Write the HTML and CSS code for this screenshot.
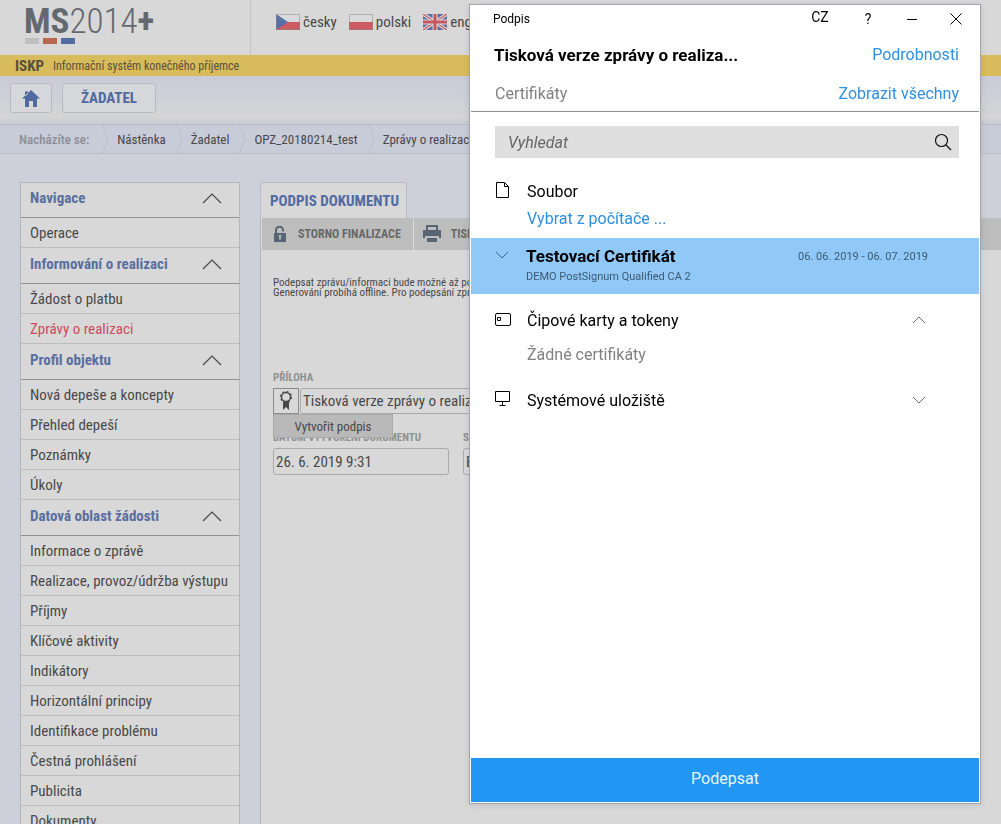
FILE: index.html
```html
<!DOCTYPE html>
<html lang="cs">
<head>
<meta charset="utf-8">
<meta name="viewport" content="width=device-width, initial-scale=1">
<title>MS2014+ – Podpis dokumentu</title>
<link rel="stylesheet" href="styles.css">
</head>
<body>
<svg class="symbols" width="0" height="0" aria-hidden="true">
  <symbol id="fold" viewBox="0 0 20 12"><path d="M1 11 10 2l9 9" fill="none" stroke="currentColor" stroke-width="1.2"/></symbol>
  <symbol id="chevron" viewBox="0 0 14 8"><path d="M1 1l6 6 6-6" fill="none" stroke="currentColor"/></symbol>
</svg>
<div class="page">
  <header class="top">
    <div class="logo-area">
      <div class="logo"><b>MS</b><span class="logo-year">2014</span><b>+</b></div>
      <div class="logo-bars"><i class="bar-grey"></i><i class="bar-red"></i><i class="bar-blue"></i></div>
    </div>
    <nav class="languages" aria-label="Jazyk">
      <a href="#"><svg class="flag" viewBox="0 0 24 16"><path fill="#d9dadb" d="M0 0h24v8H0z"/><path fill="#cc5b62" d="M0 8h24v8H0z"/><path fill="#5870a4" d="M0 0l12 8-12 8z"/><path d="M.5.5h23v15H.5z" fill="none" stroke="#888" stroke-opacity=".5"/></svg>česky</a>
      <a href="#"><svg class="flag" viewBox="0 0 24 16"><path fill="#dadada" d="M0 0h24v8H0z"/><path fill="#cc5b62" d="M0 8h24v8H0z"/><path d="M.5.5h23v15H.5z" fill="none" stroke="#888" stroke-opacity=".5"/></svg>polski</a>
      <a href="#"><svg class="flag" viewBox="0 0 24 16"><path fill="#5e6b9d" d="M0 0h24v16H0z"/><path d="M0 0l24 16M24 0L0 16" stroke="#ddd" stroke-width="3.5"/><path d="M0 0l24 16M24 0L0 16" stroke="#c65761" stroke-width="1.2"/><path d="M12 0v16M0 8h24" stroke="#ddd" stroke-width="5"/><path d="M12 0v16M0 8h24" stroke="#c65761" stroke-width="3"/></svg>english</a>
    </nav>
  </header>
  <div class="system"><b>ISKP</b><span>Informační systém konečného příjemce</span></div>
  <div class="mainmenu">
    <button class="menu-btn home" aria-label="Domů"><svg viewBox="0 0 18 17" width="18" height="17"><path fill="#50699f" d="M9 0L0 8.500h3V17h4v-6h4v6h4V8.500h3L9 0zM3 1.500h3V4L3 6.500z"/></svg></button>
    <button class="menu-btn">ŽADATEL</button>
  </div>
  <nav class="crumbs" aria-label="Drobečková navigace">
    <span class="crumb-label">Nacházíte se:</span>
    <svg class="sep" viewBox="0 0 8 30"><path d="M1 0l6 15-6 15"/></svg><a href="#">Nástěnka</a>
    <svg class="sep" viewBox="0 0 8 30"><path d="M1 0l6 15-6 15"/></svg><a href="#">Žadatel</a>
    <svg class="sep" viewBox="0 0 8 30"><path d="M1 0l6 15-6 15"/></svg><a href="#">OPZ_20180214_test</a>
    <svg class="sep" viewBox="0 0 8 30"><path d="M1 0l6 15-6 15"/></svg><a href="#">Zprávy o realizaci</a>
  </nav>
  <div class="content">
    <nav class="sidebar" aria-label="Navigace">
      <button class="group">Navigace<svg><use href="#fold"/></svg></button>
      <a href="#">Operace</a>
      <button class="group">Informování o realizaci<svg><use href="#fold"/></svg></button>
      <a href="#">Žádost o platbu</a>
      <a href="#" class="active">Zprávy o realizaci</a>
      <button class="group">Profil objektu<svg><use href="#fold"/></svg></button>
      <a href="#">Nová depeše a koncepty</a>
      <a href="#">Přehled depeší</a>
      <a href="#">Poznámky</a>
      <a href="#">Úkoly</a>
      <button class="group">Datová oblast žádosti<svg><use href="#fold"/></svg></button>
      <a href="#">Informace o zprávě</a>
      <a href="#">Realizace, provoz/údržba výstupu</a>
      <a href="#">Příjmy</a>
      <a href="#">Klíčové aktivity</a>
      <a href="#">Indikátory</a>
      <a href="#">Horizontální principy</a>
      <a href="#">Identifikace problému</a>
      <a href="#">Čestná prohlášení</a>
      <a href="#">Publicita</a>
      <a href="#">Dokumenty</a>
    </nav>
    <main class="document">
      <h1 class="tab">PODPIS DOKUMENTU</h1>
      <div class="panel">
        <div class="actions">
          <button><svg width="14" height="17" viewBox="0 0 14 17"><path d="M3 8V4.500a3.500 3.500 0 0 1 7-.5v1.500" fill="none" stroke="#566474" stroke-width="2"/><path fill="#566474" fill-rule="evenodd" d="M1 7h12v9H1zM6 9v2l.5 3h1L8 11V9z"/></svg>STORNO FINALIZACE</button>
          <button><svg width="18" height="18" viewBox="0 0 18 18"><path fill="#566474" fill-rule="evenodd" d="M3 0h12v5h3v8h-2v-2H2v2H0V5h3zM5 2v3h8V2zM4 13h10v4H4z"/></svg>TISK</button>
        </div>
        <div class="panel-body">
          <p class="note">Podepsat zprávu/informaci bude možné až po<br>Generování probíhá offline. Pro podepsání zprávy</p>
          <label class="label" for="attachment">PŘÍLOHA</label>
          <div class="attachment">
            <button class="seal" aria-label="Podpis"><svg width="14" height="20" viewBox="0 0 14 20"><circle cx="7" cy="6" r="4.500" fill="none" stroke="#484848" stroke-width="1.500"/><circle cx="7" cy="6" r="5.500" fill="none" stroke="#484848" stroke-width="1.200" stroke-dasharray="2 2.300"/><path fill="#484848" d="M4 11h6v8l-3-3-3 3z"/></svg></button>
            <input id="attachment" class="field" value="Tisková verze zprávy o realizaci" readonly>
            <button class="popup">Vytvořit podpis</button>
          </div>
          <div class="dates">
            <div class="date-col"><label class="label" for="created">DATUM VYTVOŘENÍ DOKUMENTU</label><input id="created" class="field" value="26. 6. 2019 9:31" readonly></div>
            <div class="date-col"><label class="label" for="owner">SOUBOR</label><input id="owner" class="field" value="E" readonly></div>
          </div>
        </div>
      </div>
    </main>
  </div>
</div>

<div class="dialog" role="dialog" aria-label="Podpis">
  <div class="titlebar">
    <span class="caption">Podpis</span>
    <button class="lang">CZ</button>
    <button aria-label="Nápověda">?</button>
    <button aria-label="Minimalizovat"><svg width="12" height="12" viewBox="0 0 12 12"><path d="M1 6.500h10" stroke="#000"/></svg></button>
    <button aria-label="Zavřít"><svg width="12" height="12" viewBox="0 0 12 12"><path d="M.5.5l11 11M11.500.5l-11 11" stroke="#000"/></svg></button>
  </div>
  <div class="doc-row"><h2>Tisková verze zprávy o realiza...</h2><a href="#">Podrobnosti</a></div>
  <div class="cert-row"><span>Certifikáty</span><a href="#">Zobrazit všechny</a></div>
  <div class="search">
    <input type="text" placeholder="Vyhledat" aria-label="Vyhledat">
    <svg width="18" height="18" viewBox="0 0 18 18" fill="none" stroke="#111" stroke-width="1.200"><circle cx="7.500" cy="7.500" r="6"/><path d="M12 12l5 5"/></svg>
  </div>
  <div class="store file">
    <svg width="16" height="18" viewBox="0 0 16 18" fill="none" stroke="#000"><path d="M1.500.5h8l4 4v11h-12zM9.500.5v4h4"/></svg>
    <span>Soubor</span>
  </div>
  <a class="pick" href="#">Vybrat z počítače ...</a>
  <button class="certificate">
    <svg class="chev"><use href="#chevron"/></svg>
    <span class="cert-name"><b>Testovací Certifikát</b><small>DEMO PostSignum Qualified CA 2</small></span>
    <span class="validity">06. 06. 2019 - 06. 07. 2019</span>
  </button>
  <button class="store cards">
    <svg width="16" height="18" viewBox="0 0 16 18" fill="none" stroke="#000"><rect x=".5" y="2.500" width="15" height="12" rx="1.500"/><path d="M2.500 6.500h3v3h-3z"/></svg>
    <span>Čipové karty a tokeny</span>
    <svg class="chev up"><use href="#chevron"/></svg>
  </button>
  <p class="empty">Žádné certifikáty</p>
  <button class="store">
    <svg width="16" height="18" viewBox="0 0 16 18" fill="none" stroke="#000"><path d="M.5.5h14v10H.5zM7.500 10.500v4M4.500 14.500h6"/></svg>
    <span>Systémové uložiště</span>
    <svg class="chev"><use href="#chevron"/></svg>
  </button>
  <button class="sign">Podepsat</button>
</div>
</body>
</html>
```
FILE: styles.css
```css
* { box-sizing: border-box; }
body { margin: 0; font-family: "Roboto Condensed", Roboto, sans-serif; font-size: 15px; color: #484848; background: #cdd0da; }
button, input { font: inherit; color: inherit; border: 0; padding: 0; background: none; border-radius: 0; }
a { color: inherit; text-decoration: none; }
svg { flex: none; }
h1, h2, p { margin: 0; }
.symbols { display: block; }

.page { display: flex; flex-direction: column; height: 100vh; overflow: hidden; }
.page > * { flex: none; }
.top { display: flex; height: 55px; background: #d8d8d8; }
.logo-area { width: 251px; padding: 5px 0 0 24px; border-right: 1px solid #c4c4c4; }
.logo { font-size: 35px; line-height: 33px; color: #64696f; }
.logo-year { font-weight: 300; }
.logo-bars { display: flex; gap: 4px; padding-left: 1px; }
.logo-bars i { width: 14px; height: 6px; }
.bar-grey { background: #bfbfc0; }
.bar-red { background: #b96550; }
.bar-blue { background: #526ba0; }
.languages { display: flex; gap: 12px; padding-left: 25px; height: 44px; align-items: center; overflow: hidden; }
.languages a { display: flex; align-items: center; gap: 3px; }
.flag { width: 24px; height: 16px; }
.system { display: flex; align-items: center; gap: 9px; height: 21px; padding-left: 15px; background: #d8bc5c; color: #57503b; font-size: 12px; }
.system b { font-size: 15px; }
.mainmenu { display: flex; gap: 10px; height: 48px; padding: 7px 10px 10px; background: linear-gradient(#c8cbd8, #d5d5d6 85%, #c8cbd4); }
.menu-btn { width: 94px; height: 30px; border: 1px solid #b7bac2; border-radius: 3px; background: #d6d7da; color: #50699f; font-weight: 700; font-size: 15px; }
.home { width: 42px; display: flex; align-items: center; justify-content: center; }
.crumbs { display: flex; align-items: center; height: 30px; padding-left: 19px; background: #c8cbd8; border: solid #b8bcc6; border-width: 1px 0; font-size: 13px; white-space: nowrap; overflow: hidden; }
.crumb-label { padding-right: 3px; color: #8b8e96; font-weight: 500; }
.sep { width: 8px; height: 30px; margin: 0 8px 0 9px; fill: none; stroke: #bbbfca; }

.page > .content { flex: 1; min-height: 0; display: flex; gap: 20px; padding: 28px 0 0 20px; }
.sidebar { width: 220px; flex: none; align-self: flex-start; border: solid #b5b6ba; border-width: 0 1px; background: #d8d8d8; }
.sidebar a { display: block; height: 30px; padding-left: 9px; line-height: 30px; border-bottom: 1px solid #bdbdbd; }
.sidebar .active { color: #cf4a60; }
.group { display: flex; justify-content: space-between; width: 100%; height: 36px; padding: 0 17px 4px 9px; align-items: center; border-bottom: 1px solid #949494; color: #5a6f9f; font-weight: 700; text-align: left; }
.group:first-child { border-top: 1px solid #b5b6ba; }
.group svg { width: 20px; height: 12px; color: #484848; }

.document { flex: 1; min-width: 0; display: flex; flex-direction: column; align-items: stretch; }
.tab { align-self: flex-start; height: 36px; padding: 0 7px 0 9px; line-height: 36px; font-size: 15px; color: #526aa3; background: #d8d8d8; border: 1px solid #bbbdc2; border-bottom: 0; border-radius: 3px 3px 0 0; }
.panel { flex: 1; background: #d8d8d8; border-left: 1px solid #b5b6ba; }
.actions { display: flex; height: 32px; margin-left: 1px; background: #bdbdbd; }
.actions button { display: flex; align-items: center; gap: 11px; padding: 0 12px 0 11px; font-size: 12px; font-weight: 700; color: #686868; border-right: 1px solid #dcdcdc; }
.actions button + button { padding-left: 9px; gap: 10px; border: 0; }
.panel-body { padding: 28px 12px; }
.note { height: 94px; font-size: 11px; line-height: 10px; white-space: nowrap; }
.label { display: block; height: 16px; font-size: 11px; line-height: 12px; font-weight: 700; color: #909090; white-space: nowrap; }
.attachment { position: relative; display: flex; gap: 1px; }
.seal { width: 26px; height: 26px; display: flex; align-items: center; justify-content: center; border: 1px solid #8b8b8b; }
.field { height: 27px; width: 100%; padding: 0 2px; border: 1px solid #aaa; border-radius: 3px; }
.attachment .field { width: 340px; height: 26px; }
.popup { position: absolute; top: 26px; left: 0; width: 120px; height: 24px; background: #b9b9b9; border: 1px solid #a9a9a9; font-size: 13px; }
.dates { display: flex; gap: 14px; padding-top: 18px; }
.date-col { width: 176px; }

.dialog { position: fixed; top: 4px; right: 20px; bottom: 20px; width: 512px; display: flex; flex-direction: column; padding: 0 1px 1px; border: 1px solid #a3a5aa; background: #fff; font-family: Roboto, sans-serif; font-size: 16px; color: #000; box-shadow: 0 1px 6px rgba(0, 0, 0, .12); }
.dialog a { color: #2f8fe0; }
.titlebar { display: flex; align-items: center; height: 28px; padding: 0 17px 0 22px; font-size: 12px; }
.caption { flex: 1; }
.titlebar button { display: flex; align-items: center; justify-content: center; width: 12px; height: 24px; margin-left: 32px; font-size: 14px; }
.titlebar .lang { width: 20px; padding-bottom: 4px; }
.doc-row, .cert-row { display: flex; justify-content: space-between; align-items: center; padding: 0 20px 0 24px; }
.doc-row { height: 43px; padding-left: 23px; }
.doc-row h2 { font-size: 17px; font-weight: 700; }
.cert-row { height: 36px; border-bottom: 1px solid #8f8f8f; color: #808080; }
.search { display: flex; align-items: center; height: 32px; margin: 14px 20px 16px 24px; padding: 0 7px 0 13px; background: #dfdfdf; }
.search input { flex: 1; min-width: 0; font-style: italic; outline: 0; }
.search input::placeholder { color: #666; opacity: 1; }
.store { display: flex; align-items: center; gap: 16px; width: 100%; height: 34px; padding: 0 53px 0 24px; text-align: left; }
.store span { flex: 1; }
.chev { width: 14px; height: 8px; color: #666; }
.up { transform: rotate(180deg); }
.pick { height: 30px; padding-left: 56px; line-height: 22px; }
.certificate { display: flex; align-items: flex-start; height: 56px; padding: 9px 51px 0 24px; background: #90c9f8; text-align: left; }
.certificate .chev { margin-top: 4px; color: #40637f; }
.cert-name { flex: 1; padding-left: 17px; }
.cert-name b, .cert-name small { display: block; }
.cert-name b { font-size: 17px; line-height: 19px; }
.cert-name small { font-size: 11px; line-height: 22px; color: #3d5a72; }
.validity { font-size: 11px; line-height: 20px; color: #3d5a72; }
.cards { margin-top: 9px; }
.empty { height: 46px; padding-left: 56px; line-height: 36px; color: #808080; }
.sign { height: 44px; margin-top: auto; padding-bottom: 4px; background: #2196f3; color: #e6f5ff; }
```
